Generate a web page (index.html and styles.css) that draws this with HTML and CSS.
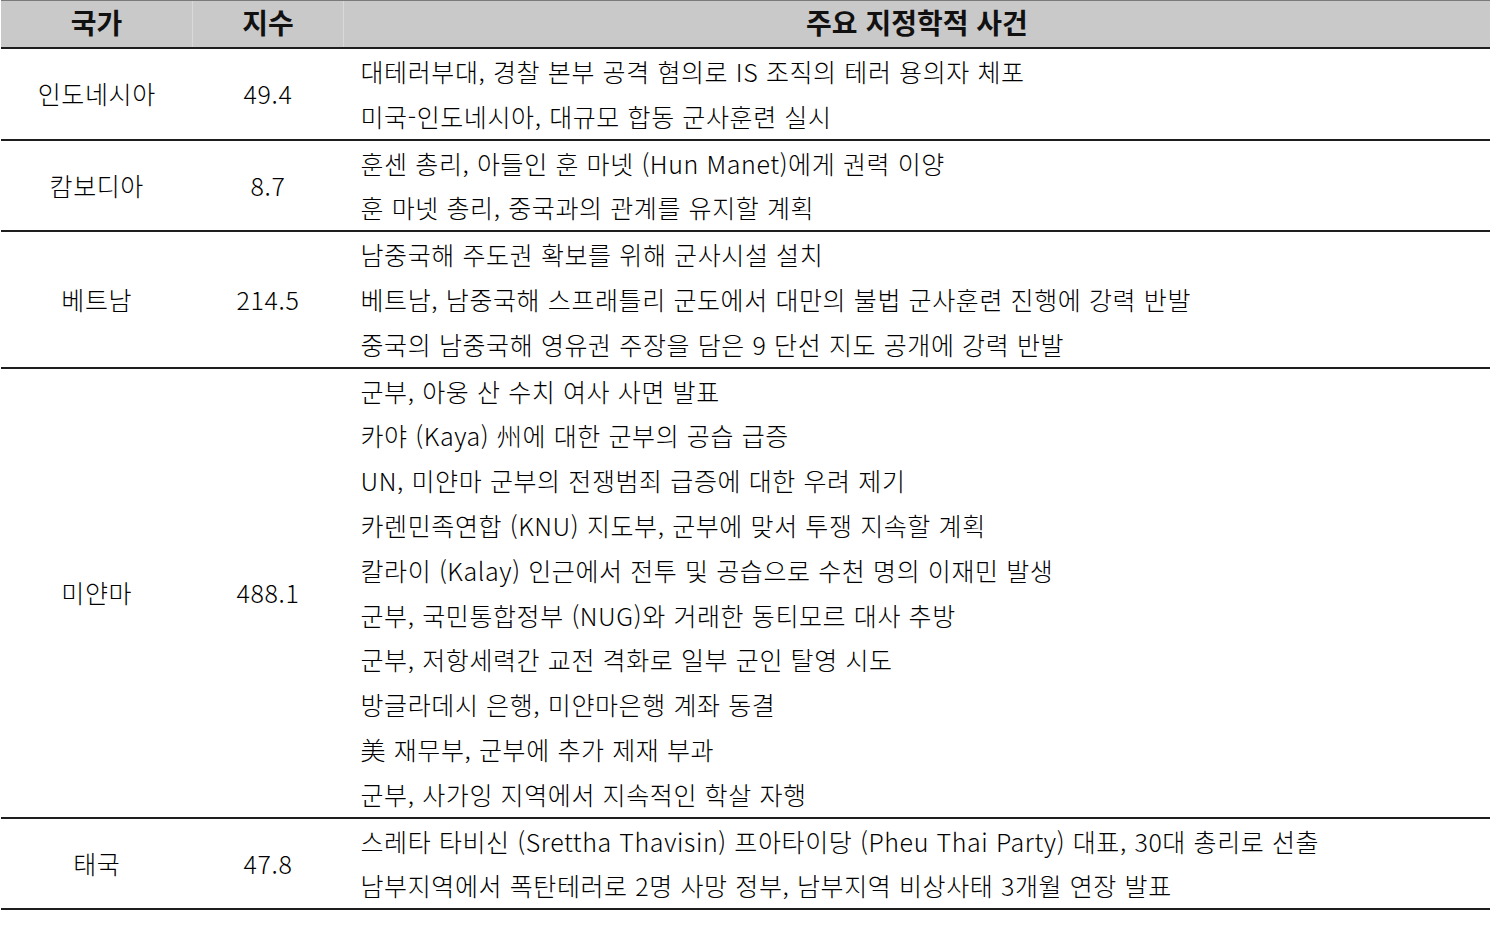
FILE: index.html
```html
<!DOCTYPE html>
<html lang="ko">
<head>
<meta charset="utf-8">
<title>동남아 지정학 지수</title>
<link rel="stylesheet" href="styles.css">
</head>
<body>
<table class="geo">
  <thead>
    <tr>
      <th class="c1">국가</th>
      <th class="c2">지수</th>
      <th class="c3">주요 지정학적 사건</th>
    </tr>
  </thead>
  <tbody>
    <tr>
      <td class="name">인도네시아</td>
      <td class="idx">49.4</td>
      <td class="ev">
        <div>대테러부대, 경찰 본부 공격 혐의로 IS 조직의 테러 용의자 체포</div>
        <div>미국-인도네시아, 대규모 합동 군사훈련 실시</div>
      </td>
    </tr>
    <tr>
      <td class="name">캄보디아</td>
      <td class="idx">8.7</td>
      <td class="ev">
        <div>훈센 총리, 아들인 훈 마넷 (Hun Manet)에게 권력 이양</div>
        <div>훈 마넷 총리, 중국과의 관계를 유지할 계획</div>
      </td>
    </tr>
    <tr>
      <td class="name">베트남</td>
      <td class="idx">214.5</td>
      <td class="ev">
        <div>남중국해 주도권 확보를 위해 군사시설 설치</div>
        <div>베트남, 남중국해 스프래틀리 군도에서 대만의 불법 군사훈련 진행에 강력 반발</div>
        <div>중국의 남중국해 영유권 주장을 담은 9 단선 지도 공개에 강력 반발</div>
      </td>
    </tr>
    <tr>
      <td class="name">미얀마</td>
      <td class="idx">488.1</td>
      <td class="ev">
        <div>군부, 아웅 산 수치 여사 사면 발표</div>
        <div>카야 (Kaya) 州에 대한 군부의 공습 급증</div>
        <div>UN, 미얀마 군부의 전쟁범죄 급증에 대한 우려 제기</div>
        <div>카렌민족연합 (KNU) 지도부, 군부에 맞서 투쟁 지속할 계획</div>
        <div>칼라이 (Kalay) 인근에서 전투 및 공습으로 수천 명의 이재민 발생</div>
        <div>군부, 국민통합정부 (NUG)와 거래한 동티모르 대사 추방</div>
        <div>군부, 저항세력간 교전 격화로 일부 군인 탈영 시도</div>
        <div>방글라데시 은행, 미얀마은행 계좌 동결</div>
        <div>美 재무부, 군부에 추가 제재 부과</div>
        <div>군부, 사가잉 지역에서 지속적인 학살 자행</div>
      </td>
    </tr>
    <tr>
      <td class="name">태국</td>
      <td class="idx">47.8</td>
      <td class="ev">
        <div>스레타 타비신 (Srettha Thavisin) 프아타이당 (Pheu Thai Party) 대표, 30대 총리로 선출</div>
        <div>남부지역에서 폭탄테러로 2명 사망 정부, 남부지역 비상사태 3개월 연장 발표</div>
      </td>
    </tr>
  </tbody>
</table>
</body>
</html>
```

FILE: styles.css
```css
html, body {
  margin: 0;
  padding: 0;
  background: #ffffff;
}

body {
  font-family: "Noto Sans CJK KR", "Noto Sans", sans-serif;
  color: #000000;
}

.geo {
  margin-left: 1px;
  width: 1489px;
  border-collapse: collapse;
  table-layout: fixed;
}

.geo th {
  height: 46px;
  padding: 0;
  background: #c9c9c9;
  border-top: 1px solid #7a7a7a;
  border-bottom: 2px solid #1e1e1e;
  font-size: 28px;
  font-weight: 700;
  color: #111;
  text-align: center;
  vertical-align: top;
  line-height: 42px;
}

.geo th + th {
  border-left: 1px solid #d9d9d9;
}

.geo .c1 { width: 191px; }
.geo .c2 { width: 150px; }

.geo td {
  padding: 0;
  border-bottom: 2px solid #1e1e1e;
  font-size: 25px;
  font-weight: 300;
  letter-spacing: 0.6px;
  line-height: 44.8px;
  vertical-align: middle;
}

.geo td.name,
.geo td.idx {
  text-align: center;
}

.geo td.ev {
  padding-left: 17px;
  text-align: left;
  white-space: nowrap;
}
```
